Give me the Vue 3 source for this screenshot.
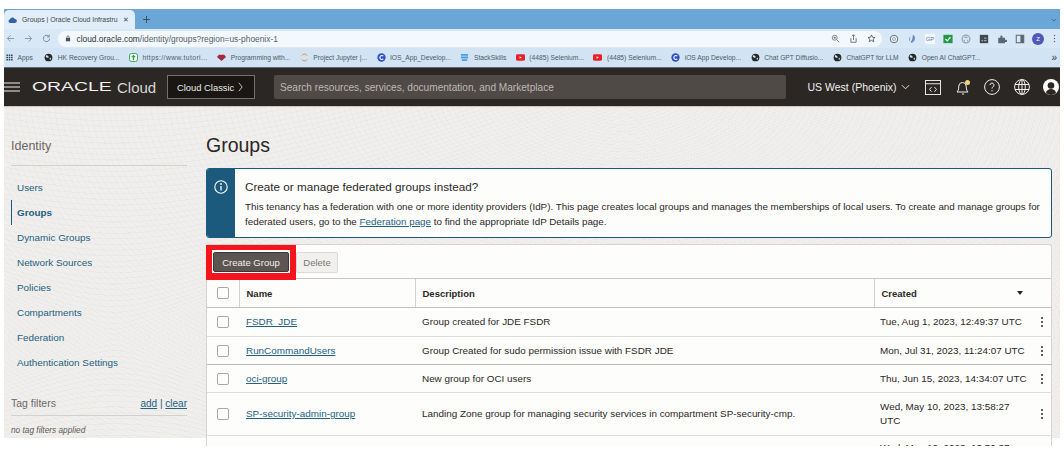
<script setup>
const bookmarks = [
  { label: 'HK Recovery Grou...', icon: 'globe' },
  { label: 'https://www.tutori...', icon: 'tp' },
  { label: 'Programming with...', icon: 'ruby' },
  { label: 'Project Jupyter |...', icon: 'jupyter' },
  { label: 'IOS_App_Develop...', icon: 'c' },
  { label: 'StackSkills', icon: 'stack' },
  { label: '(4485) Selenium...', icon: 'yt' },
  { label: '(4485) Selenium...', icon: 'yt' },
  { label: 'iOS App Develop...', icon: 'c' },
  { label: 'Chat GPT Diffusio...', icon: 'globe' },
  { label: 'ChatGPT for LLM', icon: 'globe' },
  { label: 'Open AI ChatGPT...', icon: 'globe' }
]

const navLinks = [
  'Users',
  'Groups',
  'Dynamic Groups',
  'Network Sources',
  'Policies',
  'Compartments',
  'Federation',
  'Authentication Settings'
]

const groups = [
  { name: 'FSDR_JDE', desc: 'Group created for JDE FSDR', created: 'Tue, Aug 1, 2023, 12:49:37 UTC', cls: 'r1' },
  { name: 'RunCommandUsers', desc: 'Group Created for sudo permission issue with FSDR JDE', created: 'Mon, Jul 31, 2023, 11:24:07 UTC', cls: 'r2' },
  { name: 'oci-group', desc: 'New group for OCI users', created: 'Thu, Jun 15, 2023, 14:34:07 UTC', cls: 'r3' },
  { name: 'SP-security-admin-group', desc: 'Landing Zone group for managing security services in compartment SP-security-cmp.', created: 'Wed, May 10, 2023, 13:58:27 UTC', cls: 'r4' },
  { name: '', desc: '', created: 'Wed, May 10, 2023, 13:50:37 UTC', cls: 'r5' }
]
</script>

<template>
  <div class="frame">
    <div class="tabstrip">
      <div class="tab">
        <svg class="favicon" viewBox="0 0 12 8"><path d="M3 8a2.6 2.6 0 0 1-.4-5.1A3.6 3.6 0 0 1 9 2.6 2.7 2.7 0 0 1 9.3 8z" fill="#2f63ad"/></svg>
        <span class="tab-title">Groups | Oracle Cloud Infrastru</span>
        <span class="tab-x">✕</span>
      </div>
      <svg class="plus" viewBox="0 0 10 10"><path d="M5 0v10M0 5h10" stroke="#33424f" stroke-width="1.2"/></svg>
      <svg class="tab-menu" viewBox="0 0 8 5"><path d="M1 1l3 3 3-3" fill="none" stroke="#45596b" stroke-width="1"/></svg>
    </div>

    <div class="urlbar">
      <svg class="navbtn" viewBox="0 0 10 10"><path d="M9 5H1.5M5 1.5 1.5 5 5 8.500" fill="none" stroke="#8d9aa6" stroke-width="1.100"/></svg>
      <svg class="navbtn" viewBox="0 0 10 10"><path d="M1 5h7.500M5 1.500 8.500 5 5 8.500" fill="none" stroke="#8d9aa6" stroke-width="1.100"/></svg>
      <svg class="navbtn" viewBox="0 0 10 10"><path d="M8.500 5A3.500 3.500 0 1 1 7.500 2.500M8 .8v2.400H5.600" fill="none" stroke="#7c8994" stroke-width="1.100"/></svg>
      <div class="omnibox">
        <svg class="lock" viewBox="0 0 8 10"><rect x="1" y="4" width="6" height="5" fill="#47525c"/><path d="M2.300 4V3a1.700 1.700 0 0 1 3.400 0v1" fill="none" stroke="#47525c"/></svg>
        <span class="url">cloud.oracle.com<span class="url-dim">/identity/groups?region=us-phoenix-1</span></span>
        <div class="omni-icons">
          <svg viewBox="0 0 12 12"><circle cx="5" cy="5" r="3.300" fill="none" stroke="#59636d"/><path d="M7.500 7.500 11 11M3.500 5h3M5 3.500v3" stroke="#59636d"/></svg>
          <svg viewBox="0 0 12 12"><path d="M2.500 5.500V11h7V5.500M6 8V1M4 3l2-2 2 2" fill="none" stroke="#49535c"/></svg>
          <svg viewBox="0 0 12 12"><path d="m6 1.300 1.400 3.100 3.300.3-2.500 2.200.8 3.300L6 8.500l-3 1.700.8-3.300L1.300 4.700l3.300-.3z" fill="none" stroke="#3e4750"/></svg>
        </div>
      </div>
      <div class="ext-icons">
        <svg viewBox="0 0 12 12"><circle cx="6" cy="6" r="4.500" fill="#eef3f7" stroke="#66707a" stroke-width="1.200"/><circle cx="6" cy="6" r="1.800" fill="none" stroke="#8b96a0"/></svg>
        <svg viewBox="0 0 12 12"><path d="M7 1c3 1 4 6 0 9-1 .6-2 .6-3 0 2-2 3-5 3-9zM4 3c-2 2-2 5-1 6" fill="#6b8cb8"/></svg>
        <span class="ext-gp">GP</span>
        <svg viewBox="0 0 12 12"><rect x=".5" y="1" width="11" height="10" fill="#1f9a40"/><path d="m3 6 2.200 2.200L9 3.800" fill="none" stroke="#fff" stroke-width="1.500"/></svg>
        <svg viewBox="0 0 12 12"><circle cx="6" cy="6" r="4.600" fill="none" stroke="#98a3ad" stroke-width="1.500"/><path d="M4 9V7M8 9V7M4 4h4" stroke="#98a3ad" stroke-width="1.300"/></svg>
        <svg viewBox="0 0 12 12"><rect x="1" y="1" width="10" height="10" fill="#3e4a4f"/><path d="M3 8h2M6 5h3M6 8h3" stroke="#c9d2d6"/></svg>
        <svg viewBox="0 0 12 12"><path d="M1.500 4.500H4V3a1.300 1.300 0 0 1 2.600 0v1.500h3V7H11a1.300 1.300 0 0 1 0 2.600H9.600V11H1.500z" fill="#5b6873"/></svg>
        <svg viewBox="0 0 12 12"><rect x="1.500" y="1.500" width="9" height="9" fill="none" stroke="#59646e" stroke-width="1.200"/><rect x="6.500" y="1.500" width="4" height="9" fill="#59646e"/></svg>
        <span class="profile">Z</span>
        <svg class="dots" viewBox="0 0 4 12"><circle cx="2" cy="2" r=".9" fill="#59646e"/><circle cx="2" cy="6" r=".9" fill="#59646e"/><circle cx="2" cy="10" r=".9" fill="#59646e"/></svg>
      </div>
    </div>

    <div class="bookmarks">
      <div class="bm bm-apps">
        <svg viewBox="0 0 9 9"><path d="M.5.500h2v2h-2zM3.500.500h2v2h-2zM6.500.500h2v2h-2zM.5 3.500h2v2h-2zM3.500 3.500h2v2h-2zM6.500 3.500h2v2h-2zM.5 6.500h2v2h-2zM3.500 6.500h2v2h-2zM6.500 6.500h2v2h-2z" fill="#37424c"/></svg>
        <span>Apps</span>
      </div>
      <div v-for="(b, i) in bookmarks" :key="i" class="bm" :class="'bm-' + b.icon">
        <svg viewBox="0 0 10 10">
          <template v-if="b.icon === 'globe'">
            <circle cx="5" cy="5" r="4.300" fill="#27282a"/>
            <path d="M2 3c1-1 2 0 3 1S4 6 3 5 2 4 2 3zM6 6l2-1-1 3z" fill="#d6e7f5"/>
          </template>
          <template v-else-if="b.icon === 'tp'">
            <rect x=".5" y=".5" width="9" height="9" rx="2.500" fill="#fff" stroke="#2ba34a"/>
            <path d="M5 2v6M3 4h4" stroke="#2ba34a" stroke-width="1.500"/>
          </template>
          <path v-else-if="b.icon === 'ruby'" d="M2 2h6l2 2.500L5 9 0 4.500z" fill="#a5263f"/>
          <template v-else-if="b.icon === 'jupyter'">
            <path d="M2 3a3.400 3.400 0 0 1 6 0M2 7a3.400 3.400 0 0 0 6 0" fill="none" stroke="#e8823a"/>
          </template>
          <template v-else-if="b.icon === 'c'">
            <circle cx="5" cy="5" r="4.600" fill="#2f4fc4"/>
            <path d="M7 3.500a2.200 2.200 0 1 0 0 3" fill="none" stroke="#fff" stroke-width="1.200"/>
          </template>
          <path v-else-if="b.icon === 'stack'" d="M1 1h8v2H1zM1 4h8v2H1zM2 7h6v2H2z" fill="#4f9ce0"/>
          <template v-else>
            <rect y="1.500" width="10" height="7" rx="1.500" fill="#e8202a"/>
            <path d="m4 3.500 2.500 1.500L4 6.500z" fill="#fff"/>
          </template>
        </svg>
        <span>{{ b.label }}</span>
      </div>
      <span class="bm-more">»</span>
    </div>

    <header class="topnav">
      <svg class="burger" viewBox="0 0 16 10"><path d="M0 1h16M0 5h16M0 9h16" stroke="#f2f0ee" stroke-width="1.200"/></svg>
      <div class="brand">
        <span class="brand-oracle"><span>ORACLE</span></span>
        <span class="brand-cloud">Cloud</span>
      </div>
      <div class="classic">
        Cloud Classic
        <svg viewBox="0 0 6 12"><path d="m1 1 4 5-4 5" fill="none" stroke="#e6e3e0"/></svg>
      </div>
      <div class="search">Search resources, services, documentation, and Marketplace</div>
      <div class="region">
        US West (Phoenix)
        <svg viewBox="0 0 10 6"><path d="m1 1 4 4 4-4" fill="none" stroke="#f2f0ee"/></svg>
      </div>
      <svg class="nav-ic code" viewBox="0 0 17 16"><rect x=".5" y=".5" width="16" height="15" fill="none" stroke="#f2f0ee"/><path d="M.5 4h16M7 7.500 4.800 10 7 12.500M10 7.500l2.200 2.500-2.200 2.500" fill="none" stroke="#f2f0ee"/></svg>
      <svg class="nav-ic bell" viewBox="0 0 15 16"><path d="M1 13c2-2 1.500-4 2-7a3.700 3.700 0 0 1 7 0c.500 3 0 5 2 7zM6 15h2" fill="none" stroke="#f2f0ee"/><circle cx="11.500" cy="3.500" r="2.500" fill="#f2d479"/></svg>
      <svg class="nav-ic help" viewBox="0 0 16 16"><circle cx="8" cy="8" r="7.400" fill="none" stroke="#f2f0ee"/><path d="M6 6a2 2 0 1 1 3 1.800c-.700.400-1 .8-1 1.700M8 11v1.300" fill="none" stroke="#f2f0ee"/></svg>
      <svg class="nav-ic globe" viewBox="0 0 16 16"><circle cx="8" cy="8" r="7.400" fill="none" stroke="#f2f0ee"/><ellipse cx="8" cy="8" rx="3.300" ry="7.400" fill="none" stroke="#f2f0ee"/><path d="M1 5.500h14M1 10.500h14M8 .6v14.800" stroke="#f2f0ee"/></svg>
      <svg class="nav-ic avatar" viewBox="0 0 16 16"><circle cx="8" cy="8" r="8" fill="#fff"/><circle cx="8" cy="6.500" r="3.300" fill="#2b2725"/><path d="M3 14c.5-3 2.500-4 5-4s4.500 1 5 4a8 8 0 0 1-10 0z" fill="#2b2725"/></svg>
    </header>

    <div class="content">
      <aside class="sidebar">
        <div class="side-title">Identity</div>
        <nav class="side-nav">
          <a v-for="l in navLinks" :key="l" class="side-link" :class="{ active: l === 'Groups' }">{{ l }}</a>
        </nav>
        <div class="tag-head">
          <span class="tag-title">Tag filters</span>
          <span class="tag-actions"><u>add</u> | <u>clear</u></span>
        </div>
        <div class="tag-empty">no tag filters applied</div>
      </aside>

      <main class="main">
        <h1 class="page-title">Groups</h1>

        <div class="alert">
          <div class="alert-side">
            <svg viewBox="0 0 14 14"><circle cx="7" cy="7" r="6.200" fill="none" stroke="#fff" stroke-width="1.100"/><path d="M7 6v4.500" stroke="#fff" stroke-width="1.300"/><circle cx="7" cy="4" r=".9" fill="#fff"/></svg>
          </div>
          <div class="alert-body">
            <div class="alert-title">Create or manage federated groups instead?</div>
            <p class="alert-text">This tenancy has a federation with one or more identity providers (IdP). This page creates local groups and manages the memberships of local users. To create and manage groups for federated users, go to the <a class="link">Federation page</a> to find the appropriate IdP Details page.</p>
          </div>
        </div>

        <section class="card">
          <div class="toolbar">
            <div class="highlight">
              <button class="btn-create">Create Group</button>
            </div>
            <button class="btn-delete">Delete</button>
          </div>
          <table class="grid">
            <colgroup>
              <col class="c-check">
              <col class="c-name">
              <col class="c-desc">
              <col class="c-created">
              <col class="c-menu">
            </colgroup>
            <thead>
              <tr>
                <th class="cell-check"><span class="checkbox"></span></th>
                <th>Name</th>
                <th>Description</th>
                <th colspan="2">
                  <div class="th-created">Created <i class="sort"></i></div>
                </th>
              </tr>
            </thead>
            <tbody>
              <tr v-for="g in groups" :key="g.created" :class="g.cls">
                <td class="cell-check"><span v-if="g.name" class="checkbox"></span></td>
                <td><a class="link">{{ g.name }}</a></td>
                <td>{{ g.desc }}</td>
                <td class="cell-date">{{ g.created }}</td>
                <td class="cell-menu">
                  <svg v-if="g.name" viewBox="0 0 4 12"><circle cx="2" cy="2" r="1" fill="#2b2725"/><circle cx="2" cy="6" r="1" fill="#2b2725"/><circle cx="2" cy="10" r="1" fill="#2b2725"/></svg>
                </td>
              </tr>
            </tbody>
          </table>
        </section>
      </main>
    </div>
  </div>
</template>

<style scoped>
.frame {
  margin: 9px 4px 0;
  width: 1056px;
  height: 437px;
  overflow: hidden;
  font-family: "Liberation Sans", Arial, sans-serif;
  color: #2b2725;
}

.tabstrip {
  height: 20px;
  background: #6aa7d6;
  display: flex;
  align-items: flex-end;
  position: relative;
}

.tab {
  width: 131px;
  height: 19px;
  background: #e1eef9;
  border-radius: 5px 5px 0 0;
  display: flex;
  align-items: center;
  padding: 0 6px 0 4px;
  box-sizing: border-box;
  font-size: 6.900px;
  color: #3c4650;
}

.favicon {
  width: 9px;
  height: 6px;
  margin-right: 5px;
  flex: none;
}

.tab-title {
  flex: 1;
  white-space: nowrap;
  overflow: hidden;
}

.tab-x {
  margin-left: 3px;
  font-size: 7px;
}

.plus {
  width: 7px;
  height: 7px;
  margin: 0 0 6px 8px;
}

.tab-menu {
  width: 6px;
  height: 4px;
  position: absolute;
  right: 3px;
  bottom: 7px;
}

.urlbar {
  height: 19px;
  background: #d8e8f6;
  display: flex;
  align-items: center;
  padding-left: 1px;
}

.navbtn {
  width: 9px;
  height: 9px;
  margin: 0 7px 0 1px;
  flex: none;
}

.navbtn + .navbtn {
  margin-left: 2px;
}

.omnibox {
  width: 824px;
  height: 16px;
  border-radius: 8px;
  background: #f3f8fc;
  display: flex;
  align-items: center;
  padding: 0 6px 0 7px;
  box-sizing: border-box;
}

.lock {
  width: 6px;
  height: 7px;
  margin-right: 5.500px;
}

.url {
  font-size: 8.400px;
  color: #2c343b;
}

.url-dim {
  color: #56616b;
}

.omni-icons {
  margin-left: auto;
  display: flex;
  gap: 9px;
}

.omni-icons svg {
  width: 9px;
  height: 9px;
}

.ext-icons {
  margin-left: 7px;
  display: flex;
  align-items: center;
  gap: 8px;
}

.ext-icons svg {
  width: 10px;
  height: 10px;
}

.ext-gp {
  width: 10px;
  height: 10px;
  background: #f5f8fb;
  font-size: 6px;
  line-height: 10px;
  text-align: center;
  color: #4f77b5;
}

.profile {
  width: 12px;
  height: 12px;
  margin-left: -1px;
  border-radius: 50%;
  background: #4e58b8;
  color: #fff;
  font-size: 6px;
  line-height: 12px;
  text-align: center;
}

.ext-icons .dots {
  width: 3px;
  height: 9px;
  margin-left: 1px;
}

.bookmarks {
  height: 19px;
  background: #d2e4f3;
  border-bottom: 1px solid #5b6a75;
  display: flex;
  align-items: center;
  padding-left: 2px;
  gap: 9.500px;
  font-size: 6.700px;
  color: #4d5964;
  position: relative;
  box-sizing: content-box;
}

.bm {
  display: flex;
  align-items: center;
  gap: 4.500px;
  white-space: nowrap;
}

.bm-apps {
  margin-right: 2px;
}

.bm-apps svg {
  width: 7px;
  height: 7px;
}

.bm svg {
  flex: none;
}

.bm:not(.bm-apps) svg {
  width: 9px;
  height: 9px;
}

.bm-tp span {
  letter-spacing: .42px;
}

.bm-more {
  position: absolute;
  right: 3px;
  font-size: 10px;
  color: #333;
}

.topnav {
  height: 38px;
  background: #2b2725;
  border-bottom: 1px solid #c9c6c3;
  display: flex;
  align-items: center;
  color: #f2f0ee;
}

.burger {
  width: 16px;
  height: 10px;
  flex: none;
}

.brand {
  margin-left: 12px;
  display: flex;
  align-items: center;
  width: 135px;
}

.brand-oracle {
  display: inline-block;
  width: 85px;
  font-size: 12.500px;
  font-weight: 400;
}

.brand-oracle span {
  display: inline-block;
  transform: scaleX(1.550);
  transform-origin: left center;
}

.brand-cloud {
  font-size: 15px;
  font-weight: 400;
  color: #d9d6d3;
}

.classic {
  width: 88px;
  height: 24px;
  box-sizing: border-box;
  border: 1px solid #74706c;
  background: #191614;
  display: flex;
  align-items: center;
  gap: 4px;
  padding-left: 9px;
  font-size: 9.400px;
  color: #eeeae7;
}

.classic svg {
  width: 5px;
  height: 10px;
}

.search {
  margin-left: 19px;
  width: 512px;
  height: 24px;
  box-sizing: border-box;
  border-radius: 2px;
  background: #4f4a46;
  color: #bdb9b5;
  font-size: 10.100px;
  line-height: 25px;
  padding-left: 6px;
}

.region {
  margin-left: 21.500px;
  display: flex;
  align-items: center;
  gap: 4px;
  font-size: 10.500px;
  width: 117.500px;
  white-space: nowrap;
}

.region svg {
  width: 9px;
  height: 6px;
  flex: none;
}

.nav-ic {
  flex: none;
}

.code {
  width: 16px;
  height: 15px;
}

.bell {
  width: 15px;
  height: 16px;
  margin-left: 15px;
}

.help {
  width: 16px;
  height: 16px;
  margin-left: 13px;
}

.globe {
  width: 16px;
  height: 16px;
  margin-left: 14px;
}

.avatar {
  width: 16px;
  height: 16px;
  margin-left: 13px;
}

.content {
  display: flex;
  height: 331px;
  background-color: #f1efed;
  background-image:
    repeating-radial-gradient(ellipse at 110px 230px, rgba(90, 80, 70, .035) 0 1px, transparent 1px 5px),
    repeating-radial-gradient(ellipse at 620px -20px, rgba(90, 80, 70, .03) 0 1px, transparent 1px 6px);
}

.sidebar {
  width: 202px;
  flex: none;
  padding: 30px 19px 0 7px;
  box-sizing: border-box;
}

.side-title {
  font-size: 12.500px;
  line-height: 18px;
  color: #6b6763;
  padding-bottom: 10px;
  border-bottom: 1px solid #d3d0cd;
}

.side-nav {
  display: flex;
  flex-direction: column;
  margin-top: 9px;
}

.side-link {
  height: 25px;
  line-height: 25px;
  padding-left: 5px;
  font-size: 9.900px;
  color: #22617f;
  border-left: 1.500px solid transparent;
}

.side-link.active {
  border-left-color: #1c5a7d;
  font-weight: 700;
}

.tag-head {
  margin-top: 22px;
  display: flex;
  justify-content: space-between;
  align-items: baseline;
  border-bottom: 1px solid #d3d0cd;
  padding-bottom: 6px;
}

.tag-title {
  font-size: 10.500px;
  color: #6b6763;
}

.tag-actions {
  font-size: 10px;
  color: #22617f;
}

.tag-empty {
  margin-top: 9px;
  font-size: 8.300px;
  font-style: italic;
  color: #5e5a56;
}

.main {
  flex: 1;
  min-width: 0;
  padding: 26px 8px 0 0;
}

.page-title {
  margin: 0 0 10px;
  font-size: 19.500px;
  line-height: 25px;
  font-weight: 400;
  color: #2b2725;
}

.alert {
  display: flex;
  height: 70px;
  box-sizing: border-box;
  border: 1px solid #1c5a7d;
  border-radius: 3px;
  background: #fdfdfb;
  overflow: hidden;
}

.alert-side {
  width: 28px;
  flex: none;
  background: #1c5a7d;
  display: flex;
  justify-content: center;
  padding-top: 11px;
  box-sizing: border-box;
}

.alert-side svg {
  width: 14px;
  height: 14px;
}

.alert-body {
  padding: 10px 8px 0 10px;
}

.alert-title {
  font-size: 11.700px;
  line-height: 16px;
  color: #2b2725;
}

.alert-text {
  margin: 5px 0 0;
  font-size: 9.820px;
  line-height: 14.500px;
  color: #2b2725;
}

.link {
  color: #22617f;
  text-decoration: underline;
  text-underline-offset: 1px;
}

.card {
  margin-top: 6px;
  background: #fdfdfb;
  border: 1px solid #d6d3d0;
  border-radius: 3px 3px 0 0;
  border-bottom: none;
  box-sizing: border-box;
}

.toolbar {
  height: 34px;
  box-sizing: border-box;
  display: flex;
  align-items: flex-start;
  border-bottom: 1px solid #c9c6c3;
}

.highlight {
  margin-left: -1px;
  border: solid #f5141c;
  border-width: 0 6px 7px;
  padding: 7px 1px 1px;
  background: #fff;
  height: 35px;
  box-sizing: border-box;
  width: 90px;
  display: flex;
  box-shadow: inset 0 5px 0 #f5141c;
}

.btn-create {
  width: 76px;
  height: 20px;
  padding: 0;
  border: 1px solid #3b3734;
  border-radius: 2px;
  background: #5b5651;
  color: #f2f0ee;
  font-family: inherit;
  font-size: 9.500px;
}

.btn-delete {
  margin-top: 7px;
  width: 42px;
  height: 21px;
  padding: 0;
  border: 1px solid #dcd9d6;
  border-radius: 2px;
  background: #f2f0ee;
  color: #7b7773;
  font-family: inherit;
  font-size: 9.500px;
}

.grid {
  width: 100%;
  table-layout: fixed;
  border-collapse: collapse;
  font-size: 9.900px;
}

.c-check {
  width: 32px;
}

.c-name {
  width: 176px;
}

.c-desc {
  width: 459px;
}

.c-created {
  width: 159px;
}

.c-menu {
  width: 19px;
}

th {
  height: 28px;
  padding: 0 7px;
  text-align: left;
  font-size: 9.500px;
  font-weight: 700;
  border-bottom: 1px solid #c2bfbc;
  border-left: 1px solid #d3d0cd;
}

th:first-child {
  border-left: none;
}

.th-created {
  display: flex;
  justify-content: space-between;
  align-items: center;
  padding-right: 22px;
}

.sort {
  width: 0;
  height: 0;
  border: 3.500px solid transparent;
  border-top: 4px solid #2b2725;
  border-bottom: none;
}

td {
  padding: 0 7px;
  line-height: 14px;
  border-bottom: 1px solid #dedbd8;
}

.cell-check {
  padding: 0 0 0 10px;
}

.checkbox {
  display: block;
  width: 12px;
  height: 12px;
  box-sizing: border-box;
  border: 1px solid #aaa7a4;
  border-radius: 2px;
  background: #fff;
}

.cell-date {
  padding-left: 6px;
  padding-right: 5px;
}

.cell-menu {
  padding: 0;
}

.cell-menu svg {
  display: block;
  width: 4px;
  height: 12px;
  margin-left: 7px;
}

.r1 td {
  height: 28px;
}

.r2 td {
  height: 27px;
  border-bottom-color: #b9b6b3;
}

.r3 td {
  height: 27px;
}

.r4 td {
  height: 42px;
}

.r5 td {
  height: 42px;
  vertical-align: top;
  padding-top: 5px;
}
</style>

<style>
html, body {
  margin: 0;
  background: #fff;
  overflow: hidden;
}
</style>
